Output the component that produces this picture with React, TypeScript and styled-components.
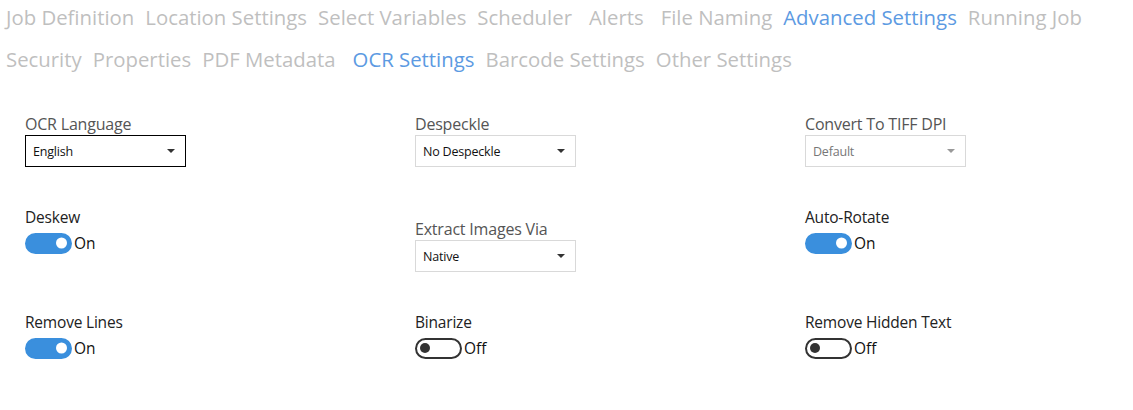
import styled, { createGlobalStyle } from "styled-components";

const GlobalStyle = createGlobalStyle`
  body {
    margin: 0;
    background: #fff;
    font-family: "Open Sans", "Noto Sans", sans-serif;
  }
`;

type Tab = { label: string; active?: boolean; wide?: boolean };

const tabRows: Tab[][] = [
  [
    { label: "Job Definition" },
    { label: "Location Settings" },
    { label: "Select Variables" },
    { label: "Scheduler", wide: true },
    { label: "Alerts", wide: true },
    { label: "File Naming" },
    { label: "Advanced Settings", active: true },
    { label: "Running Job" },
  ],
  [
    { label: "Security" },
    { label: "Properties" },
    { label: "PDF Metadata", wide: true },
    { label: "OCR Settings", active: true },
    { label: "Barcode Settings" },
    { label: "Other Settings" },
  ],
];

type SelectField = { kind: "select"; label: string; value: string; focused?: boolean; disabled?: boolean; shift?: number };
type ToggleField = { kind: "toggle"; label: string; on: boolean; shift?: number };
type Field = SelectField | ToggleField;

const fields: Field[] = [
  { kind: "select", label: "OCR Language", value: "English", focused: true },
  { kind: "select", label: "Despeckle", value: "No Despeckle" },
  { kind: "select", label: "Convert To TIFF DPI", value: "Default", disabled: true },
  { kind: "toggle", label: "Deskew", on: true },
  { kind: "select", label: "Extract Images Via", value: "Native", shift: 12 },
  { kind: "toggle", label: "Auto-Rotate", on: true },
  { kind: "toggle", label: "Remove Lines", on: true },
  { kind: "toggle", label: "Binarize", on: false },
  { kind: "toggle", label: "Remove Hidden Text", on: false },
];

const App = () => {
  return (
    <Page>
      <GlobalStyle />
      <TabNav>
        {tabRows.map((row, i) => (
          <TabRow key={i}>
            {row.map((tab) => (
              <TabItem key={tab.label} $active={tab.active} $wide={tab.wide}>
                {tab.label}
              </TabItem>
            ))}
          </TabRow>
        ))}
      </TabNav>

      <Form>
        {fields.map((field) => (
          <FieldBox key={field.label} $shift={field.shift ?? 0}>
            {field.kind === "select" ? (
              <>
                <SelectLabel>{field.label}</SelectLabel>
                <SelectBox $focused={field.focused} $disabled={field.disabled}>
                  <span>{field.value}</span>
                  <Caret $disabled={field.disabled} />
                </SelectBox>
              </>
            ) : (
              <>
                <ToggleLabel>{field.label}</ToggleLabel>
                <ToggleRow>
                  <Switch $on={field.on}>
                    <Knob $on={field.on} />
                  </Switch>
                  <SwitchText>{field.on ? "On" : "Off"}</SwitchText>
                </ToggleRow>
              </>
            )}
          </FieldBox>
        ))}
      </Form>
    </Page>
  );
};

export default App;

const Page = styled.div`
  width: 1133px;
  height: 410px;
  overflow: hidden;
`;

const TabNav = styled.nav`
  display: flex;
  flex-direction: column;
  gap: 8px;
  padding-left: 6px;
`;

const TabRow = styled.div`
  display: flex;
  gap: 11px;
`;

const TabItem = styled.div<{ $active?: boolean; $wide?: boolean }>`
  height: 34px;
  line-height: 34px;
  font-size: 20.35px;
  white-space: nowrap;
  color: ${(p) => (p.$active ? "#5c9ae2" : "#bfbfbf")};
  margin-right: ${(p) => (p.$wide ? "6px" : "0")};
  cursor: pointer;
`;

const Form = styled.div`
  display: grid;
  grid-template-columns: repeat(3, 390px);
  row-gap: 40px;
  padding: 38px 0 0 25px;
  align-items: start;
`;

const FieldBox = styled.div<{ $shift: number }>`
  display: flex;
  flex-direction: column;
  margin-top: ${(p) => p.$shift}px;
`;

const SelectLabel = styled.div`
  font-size: 16px;
  line-height: 20px;
  color: #555;
  margin-bottom: 1px;
  letter-spacing: -0.2px;
`;

const ToggleLabel = styled.div`
  font-size: 15.5px;
  line-height: 20px;
  color: #222;
  margin-bottom: 5px;
  letter-spacing: -0.2px;
`;

const SelectBox = styled.div<{ $focused?: boolean; $disabled?: boolean }>`
  box-sizing: border-box;
  width: 161px;
  height: 32px;
  display: flex;
  align-items: center;
  justify-content: space-between;
  padding: 0 10px 0 7px;
  border: 1px solid ${(p) => (p.$focused ? "#000" : "#d9d9d9")};
  font-size: 12.5px;
  color: ${(p) => (p.$disabled ? "#777" : "#111")};
  letter-spacing: -0.2px;
  background: #fff;
`;

const Caret = styled.i<{ $disabled?: boolean }>`
  width: 0;
  height: 0;
  border-left: 4px solid transparent;
  border-right: 4px solid transparent;
  border-top: 4px solid ${(p) => (p.$disabled ? "#999" : "#333")};
`;

const ToggleRow = styled.div`
  display: flex;
  align-items: center;
`;

const Switch = styled.div<{ $on: boolean }>`
  box-sizing: border-box;
  width: 47px;
  height: 21px;
  border-radius: 11px;
  position: relative;
  background: ${(p) => (p.$on ? "#3a8fdd" : "#fff")};
  border: 2px solid ${(p) => (p.$on ? "#3a8fdd" : "#333")};
`;

const Knob = styled.span<{ $on: boolean }>`
  position: absolute;
  top: 50%;
  transform: translateY(-50%);
  width: ${(p) => (p.$on ? "11px" : "10px")};
  height: ${(p) => (p.$on ? "11px" : "10px")};
  border-radius: 50%;
  background: ${(p) => (p.$on ? "#fff" : "#333")};
  ${(p) => (p.$on ? "right: 3px;" : "left: 3px;")}
`;

const SwitchText = styled.span`
  font-size: 15.5px;
  color: #111;
  margin-left: 2px;
`;
